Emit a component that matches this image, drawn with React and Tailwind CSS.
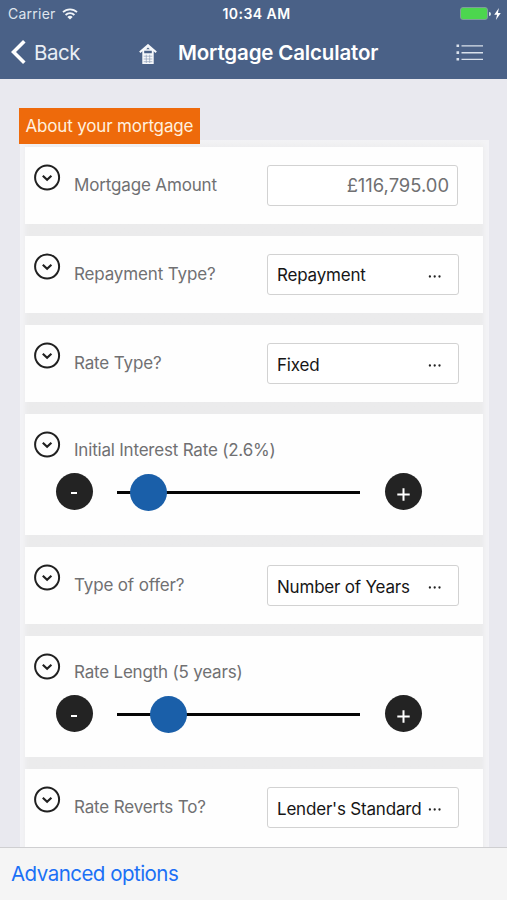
import React from 'react';

const ChevronBadge = () => {
  return (
    <svg className="mt-[17px] h-[27px] w-[27px] shrink-0" viewBox="0 0 27 27" fill="none" stroke="#202020">
      <circle cx="13.1" cy="13.5" r="12" strokeWidth="2" />
      <path d="M8.8 11.8l4.3 3.9 4.3-3.9" strokeWidth="2.2" />
    </svg>
  );
};

const FieldRow = ({ label, children }) => {
  return (
    <div className="mb-[12.1px] flex h-[77px] bg-[#fefefe] pl-[8.5px] last:mb-0 last:h-[90px]">
      <ChevronBadge />
      <div className="ml-[13.5px] mt-[26px] w-[193px] shrink-0 text-[17px] leading-6 tracking-[-0.15px] text-[#707072]">{label}</div>
      {children}
    </div>
  );
};

const Select = ({ value }) => {
  return (
    <button className="mt-[18px] flex h-[41px] w-[192px] items-center rounded-[3px] border-[1.5px] border-[#d2d2d2] bg-white pl-[9px] pt-[4px] text-left text-[17px] text-[#161616]">
      <span className="w-[150.5px] overflow-hidden whitespace-nowrap tracking-[-0.2px]">{value}</span>
      <svg className="h-[3px] w-[14px]" viewBox="0 0 14 3" fill="#222">
        <circle cx="1.9" cy="1.5" r="1.15" />
        <circle cx="6.7" cy="1.5" r="1.15" />
        <circle cx="11.5" cy="1.5" r="1.15" />
      </svg>
    </button>
  );
};

const RoundButton = ({ children }) => {
  return (
    <button className="flex h-[37px] w-[37px] shrink-0 items-center justify-center rounded-full bg-[#232323] text-white">
      {children}
    </button>
  );
};

const SliderRow = ({ label, offset }) => {
  return (
    <div className="mb-[12.1px] h-[121px] bg-[#fefefe] pl-[8.5px]">
      <div className="flex h-[59px]">
        <ChevronBadge />
        <div className="ml-[13.5px] mt-[24px] whitespace-nowrap text-[17px] leading-6 tracking-[-0.2px] text-[#707072]">{label}</div>
      </div>
      <div className="flex items-center pl-[22px]">
        <RoundButton>
          <span className="mt-[4px] h-[2px] w-[6px] bg-white" />
        </RoundButton>
        <div className="relative ml-[24.5px] mr-[24.5px] mt-[2px] h-[3px] w-[243px] bg-[#050505]">
          <div className="absolute top-[-17px] h-[37px] w-[37px] rounded-full bg-[#1a5fa9]" style={{ left: offset }} />
        </div>
        <RoundButton>
          <svg className="mt-[6px] h-[13px] w-[13px]" viewBox="0 0 13 13" stroke="currentColor" strokeWidth="2">
            <path d="M6.5 0.3v12.4M0.3 6.5h12.4" />
          </svg>
        </RoundButton>
      </div>
    </div>
  );
};

const Header = () => {
  return (
    <header className="h-[79px] shrink-0 bg-[#4a6187] text-white">
      <div className="grid h-[27px] grid-cols-3 items-center pl-[8px] pr-[6px] text-[14px]">
        <div className="flex items-center text-[#dfe5ee]">
          <span className="w-[48px] tracking-[0.25px]">Carrier</span>
          <svg className="ml-[6px] h-[12px] w-[16px]" viewBox="0 0 16 12" fill="none" stroke="#f2f5f9" strokeWidth="1.8">
            <path d="M1 4.2a10 10 0 0 1 14 0M3.6 7a6.2 6.2 0 0 1 8.8 0" />
            <path d="M8 11.5L5.3 9a3.8 3.8 0 0 1 5.4 0z" fill="#f2f5f9" stroke="none" />
          </svg>
        </div>
        <div className="whitespace-nowrap pl-[4px] text-center font-semibold tracking-[0.45px]">10:34 AM</div>
        <div className="flex items-center justify-end">
          <div className="h-[13px] w-[28px] rounded-[3px] border border-[#7f9c9c] bg-[#4cd64e]" />
          <div className="ml-px h-[4px] w-[2px] rounded-r-full bg-[#d5e4e4]" />
          <svg className="ml-[3px] h-[12px] w-[7px]" viewBox="0 0 6 11" fill="white">
            <path d="M4.3 0L0 6.1h2.6L1.5 11 6 4.5H3.4z" />
          </svg>
        </div>
      </div>
      <div className="flex h-[50px] items-center pl-[11px] pr-[24px]">
        <svg className="h-[24px] w-[15px]" viewBox="0 0 15 24" fill="none" stroke="white" strokeWidth="3.6">
          <path d="M13.3 1.3L2.5 12l10.8 10.7" />
        </svg>
        <span className="ml-[8px] mt-[2px] w-[50px] text-[20.5px] tracking-[-0.5px] text-[#e9eef5]">Back</span>
        <svg className="ml-[55px] mt-[4px] h-[21px] w-[18px]" viewBox="0 0 18 21" fill="none" stroke="#f6f8fb">
          <path d="M0.8 8.2L9 1.2l8.2 7" strokeWidth="2" />
          <path d="M3.3 6.5L9 1.7l5.7 4.8V20H3.3z" fill="#f6f8fb" stroke="none" />
          <path d="M9 3.6l1.8 1.6H7.2zM5.2 6.8h7.6v2.5H5.2z" fill="#4a6187" stroke="none" />
          <path d="M4.7 12.2h8.6M4.7 15h8.6M4.7 17.7h8.6M7.3 10.7v8.3M10.7 10.7v8.3" stroke="#91a1ba" strokeWidth="0.7" />
        </svg>
        <h1 className="ml-[21px] mt-[2px] whitespace-nowrap text-[20.5px] font-semibold tracking-[-0.15px]">Mortgage Calculator</h1>
        <svg className="ml-auto mt-[2px] h-[18px] w-[27px]" viewBox="0 0 27 18" fill="#d9e1ec">
          <path d="M0.5 0.5h2.6v2.6H0.5zM5.5 1.2H27v1.4H5.5zM0.5 7.3h2.6v2.6H0.5zM5.5 8H27v1.4H5.5zM0.5 14h2.6v2.6H0.5zM5.5 14.7H27v1.4H5.5z" />
        </svg>
      </div>
    </header>
  );
};

const App = () => {
  return (
    <div className="flex h-[900px] w-[507px] flex-col overflow-hidden bg-[#e9e9ef] font-['Inter',sans-serif]">
      <Header />
      <main className="min-h-0 flex-1 overflow-hidden pl-[19.5px] pt-[29px]">
        <div className="relative -left-[0.5px] z-10 h-[35.5px] w-[181px] whitespace-nowrap bg-[#ee6a0b] pl-[6.5px] text-[17px] leading-[36px] tracking-[-0.16px] text-[#fff0df]">
          About your mortgage
        </div>
        <section className="-mt-[3.4px] h-[720px] w-[469.5px] bg-[#ebebec] bg-linear-to-b from-[#f3f3f5] via-[#ebebec] via-[12px] to-[#ebebec] pl-[5.5px] pr-[6px] pt-[6.5px] shadow-[inset_6px_0_4px_-1px_#f3f3f6,inset_-6px_0_4px_-1px_#f3f3f6]">
          <FieldRow label="Mortgage Amount">
            <input
              className="mt-[18px] h-[41px] w-[191px] rounded-[3px] border-[1.5px] border-[#d2d2d2] bg-white pr-[8px] text-right text-[18.4px] text-[#707072]"
              defaultValue="£116,795.00"
            />
          </FieldRow>
          <FieldRow label="Repayment Type?">
            <Select value="Repayment" />
          </FieldRow>
          <FieldRow label="Rate Type?">
            <Select value="Fixed" />
          </FieldRow>
          <SliderRow label="Initial Interest Rate (2.6%)" offset={13} />
          <FieldRow label="Type of offer?">
            <Select value="Number of Years" />
          </FieldRow>
          <SliderRow label="Rate Length (5 years)" offset={33} />
          <FieldRow label="Rate Reverts To?">
            <Select value="Lender's Standard" />
          </FieldRow>
        </section>
      </main>
      <footer className="flex h-[53.5px] shrink-0 items-center border-t border-[#cfcfd1] bg-[#f5f5f5] pl-[11px]">
        <a className="mt-px text-[20.5px] tracking-[-0.52px] text-[#1b70f6]">Advanced options</a>
      </footer>
    </div>
  );
};

export default App;
